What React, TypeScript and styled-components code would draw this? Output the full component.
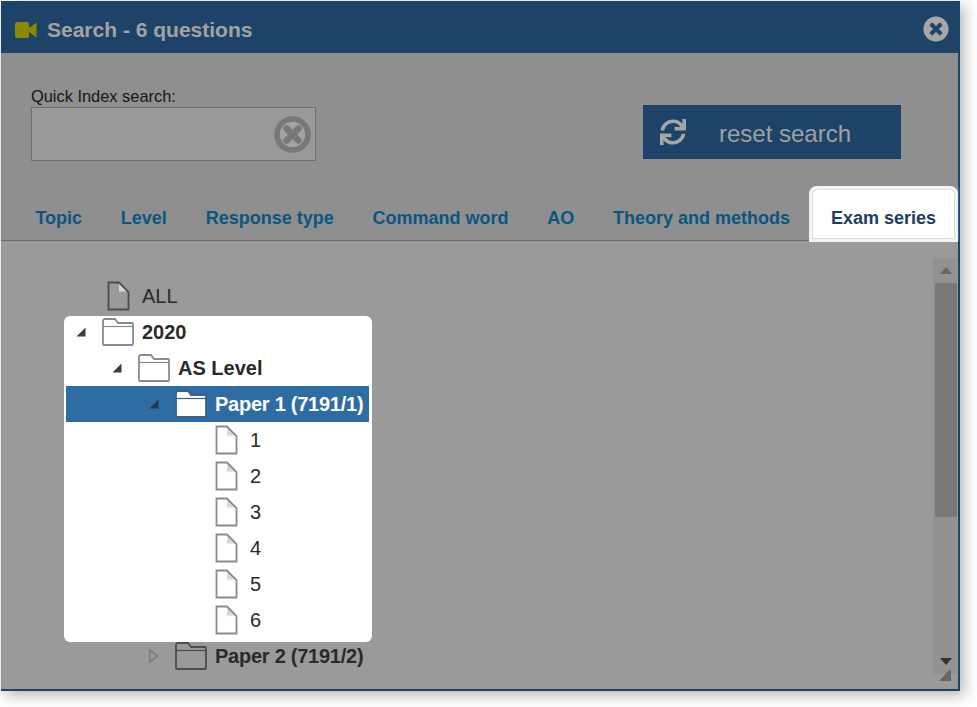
import styled, { createGlobalStyle } from 'styled-components';
import { FaSync, FaTimesCircle } from 'react-icons/fa';

const GlobalStyle = createGlobalStyle`
  html, body {
    margin: 0;
    padding: 0;
    background: #ffffff;
    font-family: "Liberation Sans", Arial, sans-serif;
  }
`;

const Page = styled.div`
  width: 977px;
  height: 707px;
  padding: 1px 0 0 1px;
  box-sizing: border-box;
  overflow: hidden;
`;

const Dialog = styled.div`
  width: 959px;
  height: 690px;
  box-sizing: border-box;
  position: relative;
  display: flex;
  flex-direction: column;
  border-right: 2px solid #1d4468;
  border-bottom: 2px solid #1d4468;
  background: #9a9a9a;
  box-shadow: 4px 4px 14px rgba(0, 0, 0, 0.3);
`;

const TitleBar = styled.header`
  height: 52px;
  flex-shrink: 0;
  background: #1d4468;
  display: flex;
  align-items: center;
  padding: 5px 9px 0 14px;
  box-sizing: border-box;
`;

const TitleText = styled.h1`
  margin: 0 0 0 10px;
  padding-top: 1px;
  flex: 1;
  font-size: 21px;
  font-weight: 700;
  color: #a3a3a3;
`;

const CloseIcon = styled(FaTimesCircle)`
  width: 26px;
  height: 26px;
  margin-top: -1px;
  color: #a6a6a6;
`;

const TopArea = styled.section`
  height: 134px;
  flex-shrink: 0;
  background: #8f8f8f;
  display: flex;
  justify-content: space-between;
  padding: 34px 57px 0 30px;
  box-sizing: border-box;
`;

const SearchField = styled.div`
  display: flex;
  flex-direction: column;
`;

const SearchLabel = styled.label`
  font-size: 16.4px;
  line-height: 18px;
  margin-bottom: 2px;
  color: #161616;
`;

const SearchBox = styled.div`
  width: 285px;
  height: 54px;
  box-sizing: border-box;
  border: 1px solid #6f6f6f;
  background: #999999;
  display: flex;
  align-items: center;
  justify-content: flex-end;
  padding-right: 4px;
`;

const ResetButton = styled.div`
  width: 258px;
  height: 54px;
  margin-top: 18px;
  background: #1d4468;
  color: #a0a0a0;
  display: flex;
  align-items: center;
  font-size: 24px;
  padding-left: 17px;
  box-sizing: border-box;
`;

const ResetIcon = styled(FaSync)`
  width: 26px;
  height: 26px;
  margin-right: 33px;
  color: #a6a6a6;
`;

const ResetLabel = styled.span`
  padding-top: 4px;
`;

const TabBar = styled.nav`
  height: 54px;
  flex-shrink: 0;
  background: #8f8f8f;
  border-bottom: 1px solid #6b6b6b;
  box-sizing: border-box;
  display: flex;
  padding-left: 15px;
`;

const Tab = styled.div`
  height: 53px;
  box-sizing: border-box;
  padding: 10px 19.4px 0;
  display: flex;
  align-items: center;
  font-size: 18px;
  font-weight: 700;
  color: #0b5680;
`;

const ActiveTab = styled.div`
  width: 143px;
  height: 50px;
  margin: 2px 3px 0 auto;
  padding-top: 8px;
  box-sizing: border-box;
  position: relative;
  z-index: 1;
  display: flex;
  align-items: center;
  justify-content: center;
  font-size: 18px;
  font-weight: 700;
  color: #1f3d5c;
  background: #ffffff;
  border: 1px solid #e0e0e0;
  border-bottom-color: #dcdcdc;
  border-radius: 5px 5px 0 0;
  box-shadow: 0 0 0 3px #f4f4f4;

  &::after {
    content: '';
    position: absolute;
    top: -3px;
    bottom: -3px;
    right: -5px;
    width: 1px;
    background: #2c68a0;
  }
`;

const TreeArea = styled.main`
  flex: 1;
  min-height: 0;
  display: flex;
  background: #9a9a9a;
  padding: 17px 1px 15px 0;
`;

const TreeScroll = styled.div`
  flex: 1;
  padding-top: 20px;
`;

const TreePopup = styled.div`
  display: flow-root;
  width: 308px;
  box-sizing: border-box;
  margin: 2px 0 -4px 63px;
  padding: 0 3px 4px 2px;
  background: #ffffff;
  border-radius: 6px;
  position: relative;
`;

const PopupList = styled.div`
  margin-top: -2px;
  position: relative;
`;

const Row = styled.div<{ $indent: number; $selected?: boolean }>`
  height: 36px;
  display: flex;
  align-items: center;
  padding-left: ${(p) => p.$indent}px;
  background: ${(p) => (p.$selected ? '#2e6da4' : 'transparent')};
  color: ${(p) => (p.$selected ? '#ffffff' : '#2a2a2a')};
`;

const Toggle = styled.span`
  width: 27px;
  height: 36px;
  flex-shrink: 0;
  display: flex;
  align-items: center;
  justify-content: flex-start;
`;

const IconSlot = styled.span`
  width: 39px;
  flex-shrink: 0;
  display: flex;
  align-items: center;
`;

const FileGlyph = styled.svg`
  width: 24px;
  height: 32px;
  margin-left: 3px;
`;

const FolderGlyph = styled.svg`
  width: 32px;
  height: 28px;
  margin-left: -1px;
`;

const Label = styled.span<{ $bold?: boolean; $tight?: boolean }>`
  font-size: 20px;
  font-weight: ${(p) => (p.$bold ? 700 : 400)};
  letter-spacing: ${(p) => (p.$tight ? '-0.25px' : '0')};
  white-space: nowrap;
`;

const ScrollBar = styled.div`
  width: 24px;
  flex-shrink: 0;
  background: #929292;
  display: flex;
  flex-direction: column;
  align-items: flex-end;
`;

const ArrowCell = styled.div`
  width: 22px;
  height: 25px;
  flex-shrink: 0;
  display: flex;
  align-items: center;
  justify-content: center;
`;

const Thumb = styled.div`
  width: 22px;
  height: 234px;
  background: #787878;
`;

const ScrollGap = styled.div`
  flex: 1;
`;

const ResizeGrip = styled.svg`
  position: absolute;
  right: 6px;
  bottom: 7px;
  width: 13px;
  height: 13px;
`;

function VideoIcon() {
  return (
    <svg width="22" height="16" viewBox="0 0 22 16">
      <rect x="0" y="0" width="14" height="16" rx="2" fill="#8c8800" />
      <path d="M14 6 L21.5 0.5 V15.5 L14 10 Z" fill="#8c8800" />
    </svg>
  );
}

function ClearIcon() {
  return (
    <svg width="37" height="37" viewBox="0 0 37 37">
      <circle cx="18.5" cy="18.5" r="15.5" fill="#a2a2a2" stroke="#787878" strokeWidth="5.5" />
      <path d="M12.5 12.5 L24.5 24.5 M24.5 12.5 L12.5 24.5" stroke="#787878" strokeWidth="6.5" strokeLinecap="round" />
    </svg>
  );
}

function FileIcon({ stroke }: { stroke: string }) {
  return (
    <FileGlyph viewBox="0 0 24 32">
      <path d="M13 2.5 V11.5 H22 Z" fill="#d5d8dd" />
      <path d="M2.5 2.5 H13 L22.5 12 V29.5 H2.5 Z" fill="none" stroke={stroke} strokeWidth="1.8" />
    </FileGlyph>
  );
}

function FolderIcon({ stroke, fill }: { stroke: string; fill: string }) {
  return (
    <FolderGlyph viewBox="0 0 32 28">
      <path
        d="M2 27 a1 1 0 0 1 -1 -1 V3 a2 2 0 0 1 2 -2 H13 L16 5 H30 a1 1 0 0 1 1 1 V26 a1 1 0 0 1 -1 1 Z"
        fill={fill}
        stroke={stroke}
        strokeWidth="1.8"
      />
      <path d="M1 8.5 H31" stroke={stroke} strokeWidth="1.2" />
    </FolderGlyph>
  );
}

function OpenArrow({ color = '#3d3d3d' }: { color?: string }) {
  return (
    <svg width="10" height="10" viewBox="0 0 10 10">
      <path d="M0.5 9.5 H9.5 V0.5 Z" fill={color} />
    </svg>
  );
}

function ClosedArrow() {
  return (
    <svg width="10" height="14" viewBox="0 0 10 14">
      <path d="M1 1 L8.5 7 L1 13 Z" fill="none" stroke="#757575" strokeWidth="1.3" />
    </svg>
  );
}

const tabs = ['Topic', 'Level', 'Response type', 'Command word', 'AO', 'Theory and methods'];
const questions = ['1', '2', '3', '4', '5', '6'];

export default function App() {
  return (
    <Page>
      <GlobalStyle />
      <Dialog>
        <TitleBar>
          <VideoIcon />
          <TitleText>Search - 6 questions</TitleText>
          <CloseIcon />
        </TitleBar>
        <TopArea>
          <SearchField>
            <SearchLabel>Quick Index search:</SearchLabel>
            <SearchBox>
              <ClearIcon />
            </SearchBox>
          </SearchField>
          <ResetButton>
            <ResetIcon />
            <ResetLabel>reset search</ResetLabel>
          </ResetButton>
        </TopArea>
        <TabBar>
          {tabs.map((t) => (
            <Tab key={t}>{t}</Tab>
          ))}
          <ActiveTab>Exam series</ActiveTab>
        </TabBar>
        <TreeArea>
          <TreeScroll>
            <Row $indent={75}>
              <Toggle />
              <IconSlot>
                <FileIcon stroke="#4c4c4c" />
              </IconSlot>
              <Label>ALL</Label>
            </Row>
            <TreePopup>
              <PopupList>
                <Row $indent={10}>
                  <Toggle>
                    <OpenArrow />
                  </Toggle>
                  <IconSlot>
                    <FolderIcon stroke="#868c95" fill="#ffffff" />
                  </IconSlot>
                  <Label $bold>2020</Label>
                </Row>
                <Row $indent={46}>
                  <Toggle>
                    <OpenArrow />
                  </Toggle>
                  <IconSlot>
                    <FolderIcon stroke="#868c95" fill="#ffffff" />
                  </IconSlot>
                  <Label $bold>AS Level</Label>
                </Row>
                <Row $indent={83} $selected>
                  <Toggle>
                    <OpenArrow color="#27364a" />
                  </Toggle>
                  <IconSlot>
                    <FolderIcon stroke="#3f5f80" fill="#ffffff" />
                  </IconSlot>
                  <Label $bold $tight>Paper 1 (7191/1)</Label>
                </Row>
                {questions.map((q) => (
                  <Row key={q} $indent={118}>
                    <Toggle />
                    <IconSlot>
                      <FileIcon stroke="#868c95" />
                    </IconSlot>
                    <Label>{q}</Label>
                  </Row>
                ))}
              </PopupList>
            </TreePopup>
            <Row $indent={148}>
              <Toggle>
                <ClosedArrow />
              </Toggle>
              <IconSlot>
                <FolderIcon stroke="#4c4c4c" fill="none" />
              </IconSlot>
              <Label $bold $tight>Paper 2 (7191/2)</Label>
            </Row>
          </TreeScroll>
          <ScrollBar>
            <ArrowCell>
              <svg width="12" height="7" viewBox="0 0 12 7">
                <path d="M6 0 L12 7 H0 Z" fill="#666666" />
              </svg>
            </ArrowCell>
            <Thumb />
            <ScrollGap />
            <ArrowCell>
              <svg width="12" height="7" viewBox="0 0 12 7">
                <path d="M0 0 H12 L6 7 Z" fill="#333333" />
              </svg>
            </ArrowCell>
          </ScrollBar>
        </TreeArea>
        <ResizeGrip viewBox="0 0 13 13">
          <path d="M0 12 L11 0 L12 3 L12 12 Z" fill="#666666" />
        </ResizeGrip>
      </Dialog>
    </Page>
  );
}
